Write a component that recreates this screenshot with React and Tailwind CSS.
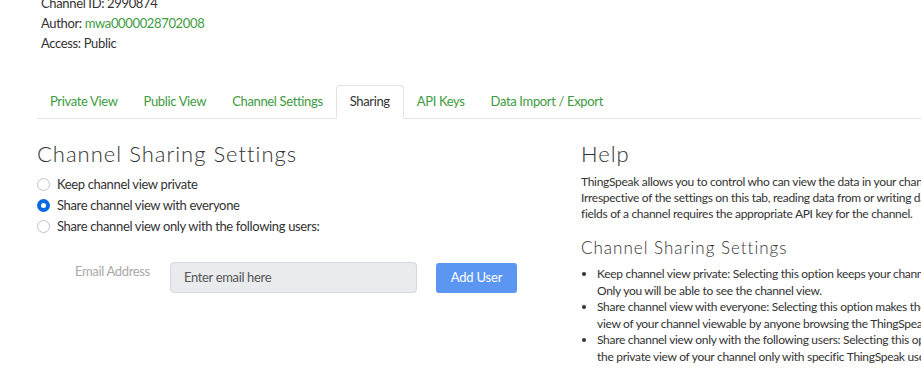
import React from 'react';

const tabs = ['Private View', 'Public View', 'Channel Settings', 'Sharing', 'API Keys', 'Data Import / Export'];

function Radio({ checked, label }) {
  return (
    <label className="flex items-center gap-[7px] h-[21px]">
      {checked ? (
        <span className="w-[13px] h-[13px] rounded-full bg-[#0b6bdc] flex items-center justify-center">
          <span className="w-[5px] h-[5px] rounded-full bg-white"></span>
        </span>
      ) : (
        <span className="w-[13px] h-[13px] rounded-full border border-[#c4c4c4] bg-white"></span>
      )}
      <span className="text-[13px] tracking-[-0.35px] text-[#333]">{label}</span>
    </label>
  );
}

export default function App() {
  return (
    <div className="w-[921px] h-[369px] overflow-hidden bg-white font-['Lato',sans-serif] text-[#333]">
      {/* CHANNEL INFO */}
      <div className="pl-[41px] -mt-[7px] text-[13px] leading-[20px] tracking-[-0.35px]">
        <div>Channel ID: 2990874</div>
        <div>Author: <span className="text-[#3e9b3e]">mwa0000028702008</span></div>
        <div>Access: Public</div>
      </div>

      {/* TABS */}
      <div className="ml-[37px] mt-[32px] flex border-b border-[#e3e3e3] h-[34px]">
        {tabs.map((t) => (
          <div
            key={t}
            className={
              t === 'Sharing'
                ? 'px-[13px] flex items-center text-[13px] tracking-[-0.35px] text-[#333] border border-[#e3e3e3] border-b-white rounded-t-[4px] -mb-px bg-white'
                : 'px-[13px] flex items-center text-[13px] tracking-[-0.35px] text-[#3e9b3e]'
            }
          >
            {t}
          </div>
        ))}
      </div>

      {/* BODY */}
      <div className="flex pl-[37px] mt-[21px]">
        <div className="w-[544px] shrink-0">
          <h2 className="text-[22px] font-light leading-[28px] text-[#333] tracking-[1px]">Channel Sharing Settings</h2>
          <div className="mt-[6px] flex flex-col">
            <Radio label="Keep channel view private" />
            <Radio checked label="Share channel view with everyone" />
            <Radio label="Share channel view only with the following users:" />
          </div>
          <div className="flex items-center mt-[25px] ml-[38px]">
            <span className="text-[13px] tracking-[-0.35px] text-[#a9a9a9] w-[95px] -mt-[12px]">Email Address</span>
            <div className="w-[247px] h-[31px] rounded-[4px] bg-[#e9ebee] border border-[#d5d8dc] flex items-center px-[13px] text-[13px] tracking-[-0.35px] text-[#555]">
              Enter email here
            </div>
            <button className="ml-[19px] w-[81px] h-[30px] rounded-[3px] bg-[#5b96f2] text-white text-[13px] tracking-[-0.2px]">Add User</button>
          </div>
        </div>

        <div className="flex-1 min-w-0 whitespace-nowrap overflow-hidden">
          <h2 className="text-[22px] font-light leading-[28px] text-[#333] tracking-[1px]">Help</h2>
          <p className="mt-[6px] text-[12px] leading-[16px] tracking-[-0.3px] text-[#333]">
            ThingSpeak allows you to control who can view the data in your channel.<br />
            Irrespective of the settings on this tab, reading data from or writing data to the<br />
            fields of a channel requires the appropriate API key for the channel.
          </p>
          <h3 className="mt-[15px] text-[17px] font-light leading-[22px] tracking-[1px]">Channel Sharing Settings</h3>
          <ul className="mt-[7px] text-[12px] leading-[16.5px] tracking-[-0.3px] list-disc pl-[16px] marker:text-[#333]">
            <li>Keep channel view private: Selecting this option keeps your channel private.<br />Only you will be able to see the channel view.</li>
            <li>Share channel view with everyone: Selecting this option makes the public<br />view of your channel viewable by anyone browsing the ThingSpeak website.</li>
            <li>Share channel view only with the following users: Selecting this option shares<br />the private view of your channel only with specific ThingSpeak users.</li>
          </ul>
        </div>
      </div>
    </div>
  );
}
